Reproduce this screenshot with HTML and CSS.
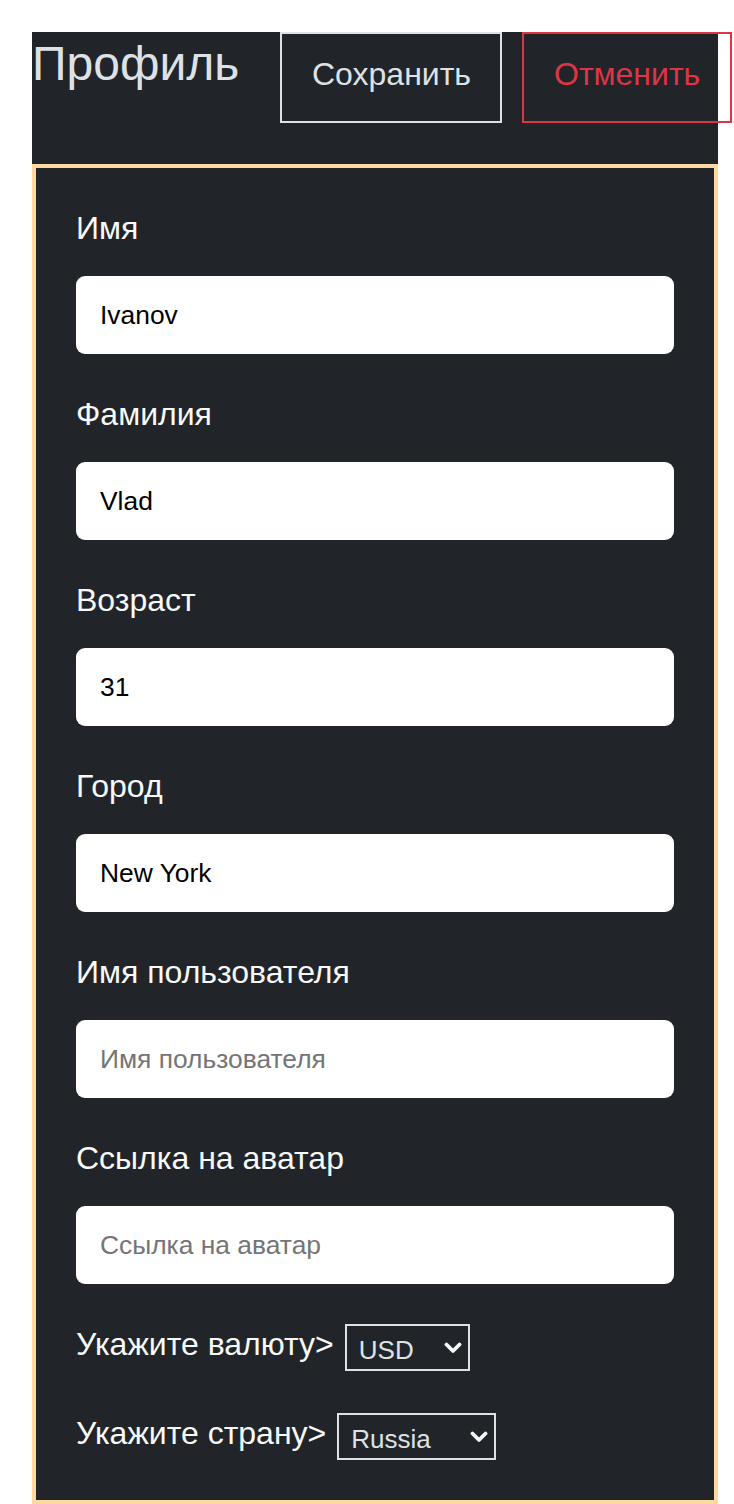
FILE: index.html
```html
<!DOCTYPE html>
<html lang="ru">

<head>
    <meta charset="UTF-8">
    <meta name="viewport" content="width=device-width, initial-scale=1.0">
    <title>Профиль</title>
    <link rel="stylesheet" href="styles.css">
</head>

<body>
    <div class="container">
        <div class="header">
            <h1 class="title">Профиль</h1>
            <button class="btn btn-save">Сохранить</button>
            <button class="btn btn-cancel">Отменить</button>
        </div>

        <form class="profile-form">
            <div class="field">
                <label class="field-label" for="firstName">Имя</label>
                <input type="text" id="firstName" class="field-input" value="Ivanov" placeholder="Имя">
            </div>
            <div class="field">
                <label class="field-label" for="lastName">Фамилия</label>
                <input type="text" id="lastName" class="field-input" value="Vlad" placeholder="Фамилия">
            </div>
            <div class="field">
                <label class="field-label" for="age">Возраст</label>
                <input type="text" id="age" class="field-input" value="31" placeholder="Возраст">
            </div>
            <div class="field">
                <label class="field-label" for="city">Город</label>
                <input type="text" id="city" class="field-input" value="New York" placeholder="Город">
            </div>
            <div class="field">
                <label class="field-label" for="username">Имя пользователя</label>
                <input type="text" id="username" class="field-input" placeholder="Имя пользователя">
            </div>
            <div class="field">
                <label class="field-label" for="avatar">Ссылка на аватар</label>
                <input type="text" id="avatar" class="field-input" placeholder="Ссылка на аватар">
            </div>

            <div class="select-row">
                <label class="select-label" for="currency">Укажите валюту&gt;</label>
                <select id="currency" class="select select-currency">
                    <option>USD</option>
                    <option>EUR</option>
                    <option>RUB</option>
                </select>
            </div>
            <div class="select-row">
                <label class="select-label" for="country">Укажите страну&gt;</label>
                <select id="country" class="select select-country">
                    <option>Russia</option>
                    <option>USA</option>
                    <option>Armenia</option>
                </select>
            </div>
        </form>
    </div>
</body>

</html>
```

FILE: styles.css
```css
body {
    font-family: 'Liberation Sans', Arial, sans-serif;
    background-color: #ffffff;
    margin: 0;
    padding: 0;
}

.container {
    width: 686px;
    margin-left: 32px;
    padding-top: 32px;
}

.header {
    display: flex;
    align-items: flex-start;
    height: 132px;
    background-color: #212529;
}

.title {
    flex: 0 0 248px;
    margin: 4px 0 0 0;
    font-size: 48px;
    font-weight: normal;
    color: #dee2e6;
}

.btn {
    flex-shrink: 0;
    height: 91px;
    padding: 0 30px 7px;
    background-color: transparent;
    border: 2px solid;
    font-family: inherit;
    font-size: 32px;
    line-height: 1.15;
    cursor: pointer;
}

.btn-save {
    width: 222px;
    color: #dee2e6;
    border-color: #dee2e6;
}

.btn-cancel {
    width: 210px;
    margin-left: 20px;
    color: #dc3545;
    border-color: #dc3545;
}

.profile-form {
    border: 4px solid #fed8a1;
    background-color: #212529;
    padding: 42px 40px 40px;
}

.field + .field {
    margin-top: 42px;
}

.field-label {
    display: block;
    margin-bottom: 29px;
    font-size: 32px;
    line-height: 37px;
    color: #f8f9fa;
}

.field-input {
    display: block;
    box-sizing: border-box;
    width: 100%;
    height: 78px;
    padding: 0 24px;
    border: none;
    border-radius: 9px;
    background-color: #ffffff;
    font-family: inherit;
    font-size: 26.4px;
    color: #000000;
}

.field-input::placeholder {
    color: #757575;
}

.select-row {
    display: flex;
    align-items: center;
    gap: 11px;
    margin-top: 40px;
}

.select-row + .select-row {
    margin-top: 42px;
}

.select-label {
    font-size: 32px;
    line-height: 1.15;
    color: #f8f9fa;
    margin-top: -7px;
}

.select {
    appearance: none;
    -webkit-appearance: none;
    box-sizing: border-box;
    height: 47px;
    padding: 4px 0 0 12px;
    border: 2px solid #dee2e6;
    border-radius: 0;
    background-color: #212529;
    background-image: url("data:image/svg+xml,%3Csvg xmlns='http://www.w3.org/2000/svg' viewBox='0 0 18 12'%3E%3Cpath d='M2.5 2.5 L9 9 L15.5 2.5' fill='none' stroke='%23f8f9fa' stroke-width='3.8' stroke-linecap='round' stroke-linejoin='round'/%3E%3C/svg%3E");
    background-repeat: no-repeat;
    background-position: right 6px center;
    background-size: 18px 12px;
    font-family: inherit;
    font-size: 26px;
    color: #dee2e6;
}

.select-currency {
    width: 125px;
}

.select-country {
    width: 159px;
}
```
